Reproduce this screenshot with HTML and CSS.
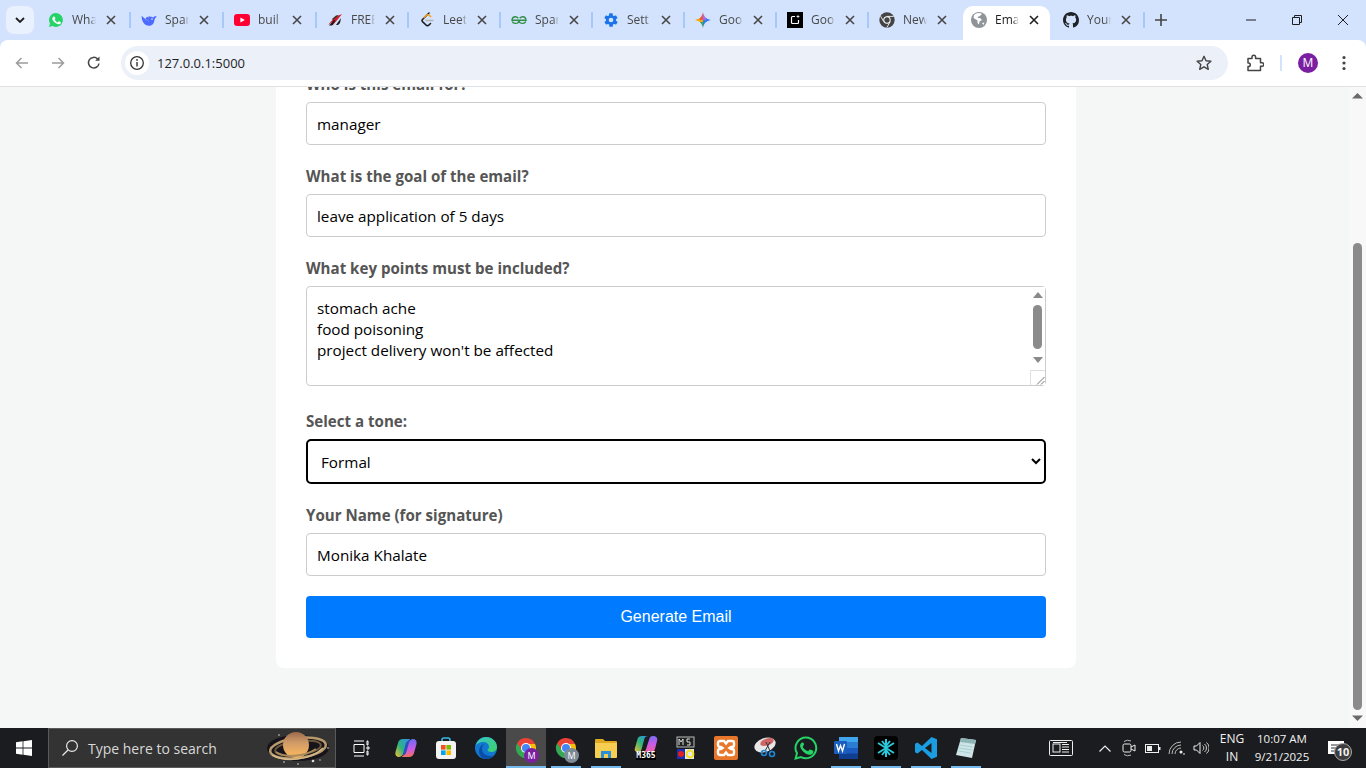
FILE: index.html
```html
<!DOCTYPE html>
<html lang="en">
<head>
<meta charset="utf-8">
<title>Email Generator</title>
<link rel="stylesheet" href="styles.css">
</head>
<body>
<svg class="defs" width="0" height="0">
  <defs>
    <symbol id="x" viewBox="0 0 10 10"><path d="M1 1l8 8M9 1l-8 8" fill="none" stroke="currentColor" stroke-width="1.6"/></symbol>
    <symbol id="wa" viewBox="0 0 24 24"><path d="M12 1.5a10.4 10.4 0 0 0-9 15.7L1.6 22.500l5.400-1.400A10.400 10.400 0 1 0 12 1.500z" fill="#25d366"/><path d="M8.300 6.600c-.3 0-.8.100-1.200.6-.5.500-1.300 1.300-1.300 3s1.300 3.400 1.500 3.600c.2.200 2.500 3.900 6.200 5.300 3 .9 3.700.6 4.300.5.700-.1 2.100-.9 2.400-1.700.3-.8.300-1.500.2-1.700-.1-.2-.3-.2-.7-.4l-2.400-1.200c-.3-.1-.6-.2-.8.200l-1.100 1.400c-.2.200-.4.300-.8.100-.4-.2-1.500-.6-2.800-1.800-1-.9-1.700-2-1.900-2.400-.2-.4 0-.5.200-.7l.9-1.200c.1-.2.100-.4 0-.6L9.800 7.400c-.3-.7-.6-.7-.8-.8z" fill="#fff" transform="translate(1.400 1) scale(.88)"/></symbol>
    <symbol id="chrome" viewBox="0 0 24 24"><path d="M22 12H12l-5 8.700A10 10 0 0 0 12 22a10 10 0 0 0 10-10z" fill="#34a853"/><path d="M3.300 7A10 10 0 0 0 12 22l5-8.700z" fill="#34a853"/><path d="M21.100 8H12v4l5 1.300L12 22a10 10 0 0 0 10-10 10 10 0 0 0-.9-4z" fill="#fbbc04"/><path d="M12 2A10 10 0 0 0 3.300 7l4.500 7.500L12 8h9.100A10 10 0 0 0 12 2z" fill="#ea4335"/><circle cx="12" cy="12" r="5" fill="#fff"/><circle cx="12" cy="12" r="4" fill="#4285f4"/></symbol>
    <clipPath id="gem-clip"><path d="M8 0c.6 4.500 3.500 7.400 8 8-4.500.6-7.400 3.500-8 8-.6-4.500-3.500-7.400-8-8 4.500-.6 7.400-3.500 8-8z"/></clipPath>
  </defs>
</svg>

<header class="titlebar">
  <button class="overview" type="button"><svg width="10" height="6" viewBox="0 0 10 6"><path d="M1 1l4 4 4-4" fill="none" stroke="#1f1f1f" stroke-width="1.800"/></svg></button>
  <div class="tabs">
    <div class="tab sep"><svg class="fav" viewBox="0 0 24 24"><use href="#wa"/></svg><span class="tab-text">Wha</span><svg class="close"><use href="#x"/></svg></div>
    <div class="tab sep"><svg class="fav" viewBox="0 0 24 24"><path d="M1 5.500C.5 13 5 20.500 12 20.500c4 0 7.500-3 8-7.500.3-2.200 1-3.800 2.700-5.200l.8-1.600-2.800.2c-1 .4-1.700 1-2.200 1.900C15.800 7 13 6 11 7c1.200 2 1.300 5 .3 7.200C8 12 4 8.500 1 5.500z" fill="#4d6bfe"/><path d="M11 7c-3 .5-4.500 2-4 3.500 1.300 1.500 2.800 2.700 4.300 3.700 1-2.200.9-5.200-.3-7.200z" fill="#4d6bfe"/><circle cx="16.500" cy="10.500" r="1.100" fill="#fff"/></svg><span class="tab-text">Spar</span><svg class="close"><use href="#x"/></svg></div>
    <div class="tab sep"><svg class="fav" viewBox="0 0 16 16"><rect y="2" width="16" height="12" rx="3.200" fill="#ff0033"/><path d="M6.400 5.400v5.200L10.800 8z" fill="#fff"/></svg><span class="tab-text">buil</span><svg class="close"><use href="#x"/></svg></div>
    <div class="tab sep"><svg class="fav" viewBox="0 0 16 16"><path d="M1 13 8 5l7-3-3.500 4.500L6 13H4l3-4z" fill="#d11f26"/><path d="M2 13.500 7 8l1.500.5L5 13.500zM9 13l5-7-1 5-2 2z" fill="#1a1a1a"/><path d="M5 7 9 3.500l3-.5-6 5z" fill="#333"/></svg><span class="tab-text">FREE</span><svg class="close"><use href="#x"/></svg></div>
    <div class="tab sep"><svg class="fav" viewBox="0 0 16 16"><path d="M10 1 3.500 7.500a1.500 1.500 0 0 0 0 2.100L7 13a2 2 0 0 0 3 0l1.500-1.500" fill="none" stroke="#1a1a1a" stroke-width="1.500" stroke-linecap="round"/><path d="M5 5.500 7.500 3.300c.8-.7 2-.7 2.800 0l1.400 1.300" fill="none" stroke="#f89f1b" stroke-width="1.500" stroke-linecap="round"/><path d="M7 8.500h7" stroke="#b3b3b3" stroke-width="1.500" stroke-linecap="round"/></svg><span class="tab-text">Leet</span><svg class="close"><use href="#x"/></svg></div>
    <div class="tab sep"><svg class="fav" viewBox="0 0 16 16"><path d="M8 8.200H1c.2-2.200 1.500-3.400 3.300-3.400 1.300 0 2.200.5 3 1.400M8 8.200c-.1 2-1.700 3.200-3.700 3.200-1.500 0-2.600-.7-3.100-1.900M8 8.200h7c-.2-2.200-1.500-3.400-3.300-3.400-1.300 0-2.200.5-3 1.400M8 8.200c.1 2 1.700 3.200 3.700 3.200 1.500 0 2.600-.7 3.100-1.900" fill="none" stroke="#2f8d46" stroke-width="1.400"/></svg><span class="tab-text">Spar</span><svg class="close"><use href="#x"/></svg></div>
    <div class="tab sep"><svg class="fav" viewBox="0 0 24 24"><path fill="#1a73e8" fill-rule="evenodd" d="M19.400 13a7.600 7.600 0 0 0 0-2l2.100-1.600a.5.500 0 0 0 .1-.6l-2-3.500a.5.500 0 0 0-.6-.2l-2.500 1a7.300 7.300 0 0 0-1.700-1l-.4-2.700a.5.500 0 0 0-.5-.4h-4a.5.500 0 0 0-.5.400l-.4 2.700a7.300 7.300 0 0 0-1.700 1l-2.500-1a.5.500 0 0 0-.6.200l-2 3.500a.5.500 0 0 0 .1.600L4.600 11a7.600 7.600 0 0 0 0 2l-2.100 1.600a.5.500 0 0 0-.1.600l2 3.500c.1.200.4.300.6.200l2.500-1c.5.400 1.100.7 1.700 1l.4 2.700c0 .2.300.4.500.4h4c.2 0 .5-.2.500-.4l.4-2.700c.6-.3 1.200-.6 1.700-1l2.500 1c.2.100.5 0 .6-.2l2-3.500a.5.500 0 0 0-.1-.6zM12 15.500a3.500 3.500 0 1 1 0-7 3.500 3.500 0 0 1 0 7z"/></svg><span class="tab-text">Sett</span><svg class="close"><use href="#x"/></svg></div>
    <div class="tab sep"><svg class="fav" viewBox="0 0 16 16"><g clip-path="url(#gem-clip)"><rect width="8" height="8" fill="#ef5a3c"/><rect x="8" width="8" height="8" fill="#a56ee8"/><rect y="8" width="8" height="8" fill="#f9ab00"/><rect x="8" y="8" width="8" height="8" fill="#2f7ff0"/><rect x="5" y="10" width="3" height="6" fill="#34a853"/><rect y="6" width="5" height="4" fill="#f9ab00"/><rect x="11" y="6" width="5" height="4" fill="#2f7ff0"/></g></svg><span class="tab-text">Goo</span><svg class="close"><use href="#x"/></svg></div>
    <div class="tab sep"><svg class="fav" viewBox="0 0 16 16"><rect width="16" height="16" fill="#000"/><path d="M8 4.500H5.500a1 1 0 0 0-1 1v5a1 1 0 0 0 1 1h5a1 1 0 0 0 1-1V8" fill="none" stroke="#fff" stroke-width="1.200"/><path d="M11 2.500l.5 1.500 1.500.5-1.500.5-.5 1.500-.5-1.500L9 4.500l1.500-.5z" fill="#fff"/></svg><span class="tab-text">Goo</span><svg class="close"><use href="#x"/></svg></div>
    <div class="tab"><svg class="fav" viewBox="0 0 24 24"><circle cx="12" cy="12" r="11.500" fill="#444"/><circle cx="12" cy="12" r="5.500" fill="#fff"/><circle cx="12" cy="12" r="4" fill="#444"/><path d="M12 6.600h10M7.300 14.700 2.400 6.300M16.700 14.700l-5 8.600" stroke="#fff" stroke-width="1.300"/></svg><span class="tab-text">New</span><svg class="close"><use href="#x"/></svg></div>
    <div class="tab active"><svg class="fav" viewBox="0 0 16 16"><circle cx="8" cy="8" r="8" fill="#8f9499"/><path d="M5 1.500 3 3l-.5 3L5 7.500l1.500 1V11l1.500 1.500.5-3L11 8 9 6H7l-.5-1L9 4l2-2.300A7 7 0 0 0 5 1.500zM11 11l2.500-.5-1 2.500z" fill="#fff"/></svg><span class="tab-text">Ema</span><svg class="close"><use href="#x"/></svg></div>
    <div class="tab sep"><svg class="fav" viewBox="0 0 16 16"><path fill="#1f2328" d="M8 0C3.580 0 0 3.580 0 8c0 3.540 2.290 6.530 5.470 7.590.4.070.55-.17.550-.38 0-.19-.01-.82-.01-1.490-2.010.37-2.530-.49-2.690-.94-.09-.23-.48-.94-.82-1.130-.28-.15-.68-.52-.01-.53.630-.01 1.080.58 1.230.82.720 1.210 1.870.870 2.330.66.070-.52.280-.87.510-1.070-1.780-.2-3.640-.89-3.640-3.950 0-.87.310-1.590.820-2.150-.08-.2-.36-1.020.08-2.120 0 0 .67-.21 2.200.82.640-.18 1.320-.27 2-.27s1.360.09 2 .27c1.530-1.040 2.200-.82 2.200-.82.440 1.100.16 1.920.08 2.120.51.560.82 1.270.82 2.150 0 3.070-1.870 3.750-3.650 3.950.29.250.54.730.54 1.480 0 1.070-.01 1.930-.01 2.200 0 .21.150.46.550.38A8.010 8.010 0 0 0 16 8c0-4.420-3.580-8-8-8z"/></svg><span class="tab-text">Your</span><svg class="close"><use href="#x"/></svg></div>
  </div>
  <button class="newtab" type="button"><svg width="12" height="12" viewBox="0 0 12 12"><path d="M6 0v12M0 6h12" stroke="#444" stroke-width="1.600"/></svg></button>
  <div class="winctl">
    <span class="winbtn"><svg width="10" height="10" viewBox="0 0 10 10"><path d="M0 5h10" stroke="#1f1f1f"/></svg></span>
    <span class="winbtn"><svg width="10" height="10" viewBox="0 0 10 10"><path d="M.5 2.500h7v7h-7zM2.500 2.500v-2h7v7h-2" fill="none" stroke="#1f1f1f"/></svg></span>
    <span class="winbtn"><svg width="10" height="10" viewBox="0 0 10 10"><path d="M0 0l10 10M10 0 0 10" stroke="#1f1f1f"/></svg></span>
  </div>
</header>

<nav class="toolbar">
  <span class="tool"><svg width="16" height="16" viewBox="0 0 16 16"><path d="M14 8H2.500M7.500 3l-5 5 5 5" fill="none" stroke="#9c9c9c" stroke-width="1.500"/></svg></span>
  <span class="tool"><svg width="16" height="16" viewBox="0 0 16 16"><path d="M2 8h11.500M8.500 3l5 5-5 5" fill="none" stroke="#9c9c9c" stroke-width="1.500"/></svg></span>
  <span class="tool"><svg width="16" height="16" viewBox="0 0 16 16"><path d="M13 8.500A5.300 5.300 0 1 1 11.600 4" fill="none" stroke="#444" stroke-width="1.500"/><path d="M13.500 1.500v4.300H9.200z" fill="#444"/></svg></span>
  <div class="omnibox">
    <span class="chip"><svg width="16" height="16" viewBox="0 0 16 16"><circle cx="8" cy="8" r="6.300" fill="none" stroke="#333" stroke-width="1.300"/><path d="M8 7v4.500" stroke="#333" stroke-width="1.400"/><circle cx="8" cy="4.900" r=".9" fill="#333"/></svg></span>
    <span class="url">127.0.0.1:5000</span>
    <svg class="star" width="16" height="16" viewBox="0 0 16 16"><path d="M8 1.300l2 4.500 4.900.5-3.700 3.200 1.100 4.800L8 11.800l-4.300 2.500 1.100-4.800L1.100 6.300 6 5.800z" fill="none" stroke="#444" stroke-width="1.400" stroke-linejoin="round"/></svg>
  </div>
  <span class="tool ext"><svg width="18" height="18" viewBox="0 0 18 18"><path d="M2 4.500h4V3a1.800 1.800 0 0 1 3.600 0v1.500h4.900v4.200H16a1.800 1.800 0 0 1 0 3.600h-1.500v4.200H2v-4h0.500a1.800 1.800 0 0 0 0-3.600H2z" fill="none" stroke="#444" stroke-width="1.500" stroke-linejoin="round"/></svg></span>
  <span class="tool-sep"></span>
  <span class="tool"><span class="avatar">M</span></span>
  <span class="tool"><svg width="4" height="16" viewBox="0 0 4 16"><circle cx="2" cy="2.500" r="1.600" fill="#444"/><circle cx="2" cy="8" r="1.600" fill="#444"/><circle cx="2" cy="13.500" r="1.600" fill="#444"/></svg></span>
</nav>

<div class="viewport">
  <main class="page">
    <form class="card">
      <div class="group">
        <label class="label" for="who">Who is this email for?</label>
        <input class="field" id="who" type="text" value="manager">
      </div>
      <div class="group">
        <label class="label" for="goal">What is the goal of the email?</label>
        <input class="field" id="goal" type="text" value="leave application of 5 days">
      </div>
      <div class="group group-area">
        <label class="label" for="points">What key points must be included?</label>
        <div class="area-wrap">
          <textarea class="field area" id="points">stomach ache
food poisoning
project delivery won't be affected</textarea>
          <div class="area-bar">
            <svg width="10" height="6" viewBox="0 0 10 6"><path d="M0 6l5-6 5 6z" fill="#8a8a8a"/></svg>
            <span class="area-thumb"></span>
            <svg width="10" height="6" viewBox="0 0 10 6"><path d="M0 0l5 6 5-6z" fill="#8a8a8a"/></svg>
          </div>
          <div class="area-corner"><svg width="9" height="9" viewBox="0 0 9 9"><path d="M8.500 1 1 8.500M8.500 5 5 8.500" stroke="#777" stroke-width="1"/></svg></div>
        </div>
      </div>
      <div class="group">
        <label class="label" for="tone">Select a tone:</label>
        <select class="tone" id="tone">
          <option>Formal</option>
          <option>Casual</option>
          <option>Friendly</option>
        </select>
      </div>
      <div class="group">
        <label class="label" for="name">Your Name (for signature)</label>
        <input class="field" id="name" type="text" value="Monika Khalate">
      </div>
      <button class="submit" type="button">Generate Email</button>
    </form>
  </main>
  <aside class="scrollbar">
    <svg class="sb-arrow" width="11" height="7" viewBox="0 0 11 7"><path d="M0 6.500 5.500 1 11 6.500z" fill="#6a6a6a"/></svg>
    <span class="sb-thumb"></span>
    <svg class="sb-arrow" width="11" height="7" viewBox="0 0 11 7"><path d="M0 .5 5.500 6 11 .5z" fill="#6a6a6a"/></svg>
  </aside>
</div>

<footer class="taskbar">
  <span class="start"><svg width="16" height="16" viewBox="0 0 16 16"><path d="M0 2.300 6.600 1.300v6.200H0zM7.400 1.200 16 0v7.500H7.400zM0 8.400h6.600v6.300L0 13.800zM7.400 8.400H16V16l-8.600-1.200z" fill="#fff"/></svg></span>
  <div class="search">
    <svg width="18" height="18" viewBox="0 0 18 18"><circle cx="11" cy="7" r="5.400" fill="none" stroke="#e8e8e8" stroke-width="1.200"/><path d="M7 11 1.500 16.500" stroke="#e8e8e8" stroke-width="1.300"/></svg>
    <span class="search-text">Type here to search</span>
    <svg class="planet" width="66" height="36" viewBox="0 0 66 36">
      <defs>
        <linearGradient id="pl" x1="0" y1="0" x2="0" y2="1"><stop offset="0" stop-color="#9c6a4a"/><stop offset=".4" stop-color="#d09a68"/><stop offset=".8" stop-color="#f0b060"/></linearGradient>
      </defs>
      <ellipse cx="33" cy="18" rx="31" ry="13" fill="#16131a"/>
      <g transform="rotate(-7 33 18)">
        <ellipse cx="33" cy="18" rx="28" ry="10" fill="none" stroke="#b79a6c" stroke-width="2.500"/>
        <ellipse cx="33" cy="18" rx="23" ry="7" fill="none" stroke="#6b563b" stroke-width="2"/>
      </g>
      <circle cx="31" cy="15" r="13" fill="url(#pl)"/>
      <path d="M11 22c8 6 28 5 40-3" fill="none" stroke="#a98a5c" stroke-width="2"/>
      <path d="M7 25c12 7 38 6 51-7" fill="none" stroke="#d6b98a" stroke-width="1.600"/>
      <circle cx="14" cy="5" r=".8" fill="#ddd"/><circle cx="63" cy="18" r=".8" fill="#ddd"/><circle cx="48" cy="31" r="1.300" fill="#ddd"/><circle cx="19" cy="32" r=".8" fill="#ddd"/><circle cx="55" cy="30" r=".7" fill="#ddd"/><circle cx="33" cy="34" r=".8" fill="#ddd"/>
    </svg>
  </div>
  <span class="taskview"><svg width="17" height="17" viewBox="0 0 17 17"><path d="M1 1h10M1 16h10M1 4.500h10v8H1zM14 1h1v4h-1zM14 7h2v2h-2zM14 11h1v4h-1z" fill="none" stroke="#fff" stroke-width="1"/></svg></span>
  <div class="apps">
    <span class="app"><svg width="22" height="22" viewBox="0 0 22 22"><defs><linearGradient id="cp1" x1="0" y1="1" x2="1" y2="0"><stop offset="0" stop-color="#f9c02f"/><stop offset=".45" stop-color="#2fb47c"/><stop offset="1" stop-color="#2f8ff0"/></linearGradient><linearGradient id="cp2" x1="0" y1="0" x2="0" y2="1"><stop offset="0" stop-color="#6a6cf0"/><stop offset=".55" stop-color="#c95be8"/><stop offset="1" stop-color="#f5705c"/></linearGradient></defs><rect x="5" y="4" width="12" height="14" fill="#2b4fc0"/><path d="M14 20H8c-1.500 0-1.500-1 0-1.500 2-.6 3-2 3.500-4L14 5.500C14.500 3.500 16 2 18 2c3 0 4 2.500 3.500 5L19 16c-.6 2.500-2.500 4-5 4z" fill="url(#cp2)"/><path d="M8 2h6c1.500 0 1.500 1 0 1.500-2 .6-3 2-3.500 4L8 16.500C7.500 18.500 6 20 4 20c-3 0-4-2.500-3.500-5L3 6c.6-2.500 2.500-4 5-4z" fill="url(#cp1)"/></svg></span>
    <span class="app"><svg width="24" height="24" viewBox="0 0 24 24"><path d="M8 6V4a2 2 0 0 1 2-2h4a2 2 0 0 1 2 2v2" fill="none" stroke="#3ab8e8" stroke-width="1.600"/><rect x="2" y="5" width="20" height="18" rx="3" fill="#f3f3f3"/><rect x="7" y="9" width="4.600" height="4.600" fill="#f25022"/><rect x="12.400" y="9" width="4.600" height="4.600" fill="#7fba00"/><rect x="7" y="14.400" width="4.600" height="4.600" fill="#00a4ef"/><rect x="12.400" y="14.400" width="4.600" height="4.600" fill="#ffb900"/></svg></span>
    <span class="app"><svg width="24" height="24" viewBox="0 0 24 24"><defs><linearGradient id="ed1" x1="0" y1="0" x2="1" y2="1"><stop offset="0" stop-color="#36c7c4"/><stop offset="1" stop-color="#3ecf6e"/></linearGradient></defs><circle cx="12" cy="12" r="11" fill="#1277cf"/><path d="M1.500 10C3 4 8 1 12 1c6 0 11 4.500 11 10 0 3.500-3 5-5.500 5-2 0-4-1-4-2 0-.5 1.500-1 1.500-3C15 8 12.500 6 9.500 6 6 6 2.500 8 1.500 10z" fill="url(#ed1)"/><path d="M12.500 23c-5 0-7.500-4-7.500-8 0-3 2-6 5-7-1.500 1.500-2 3.500-2 5 0 4 4 7 8.500 7 1 0 2-.2 2.500-.5-1.500 2-4 3.500-6.500 3.500z" fill="#0a4ea8"/></svg></span>
    <span class="app app-active"><span class="badged"><svg width="24" height="24"><use href="#chrome"/></svg><span class="mini mini-purple">M</span></span></span>
    <span class="app app-open"><span class="badged"><svg width="24" height="24"><use href="#chrome"/></svg><span class="mini mini-gray">M</span></span></span>
    <span class="app app-open"><svg width="22" height="20" viewBox="0 0 22 20"><path d="M0 2a1 1 0 0 1 1-1h7l2 2h11a1 1 0 0 1 1 1v3H0z" fill="#e0a820"/><path d="M0 5h22v14a1 1 0 0 1-1 1H1a1 1 0 0 1-1-1z" fill="#f7cd52"/><path d="M6 20v-7h10v7h-3v-4H9v4z" fill="#2b8fd8"/></svg></span>
    <span class="app"><span class="m365"><svg width="24" height="16" viewBox="0 0 22 15"><defs><linearGradient id="m1" x1="0" y1="1" x2="1" y2="0"><stop offset="0" stop-color="#f0c030"/><stop offset=".5" stop-color="#2fb47c"/><stop offset="1" stop-color="#2f8ff0"/></linearGradient><linearGradient id="m2" x1="0" y1="0" x2="0" y2="1"><stop offset="0" stop-color="#7a6cf0"/><stop offset=".5" stop-color="#c95be8"/><stop offset="1" stop-color="#f0609a"/></linearGradient></defs><path d="M13 15H8c2 0 2.500-1 3-2.500L14 3c.5-2 1.500-3 3.500-3 3 0 4.500 1.500 4 4l-2 8c-.5 2-2 3-4 3z" fill="url(#m2)"/><path d="M7 0h6c-2 0-3 1-3.500 2.500L7 12c-.5 2-1.500 3-3.500 3-2.500 0-3.500-1.500-3-3L3 3C3.500 1 5 0 7 0z" fill="url(#m1)"/></svg><span class="m365-text">M365</span></span></span>
    <span class="app"><svg width="20" height="24" viewBox="0 0 20 24"><rect x="1" y="1" width="17" height="10" fill="#222" stroke="#bbb"/><rect x="1" y="13" width="17" height="10" fill="#e8e8e8"/><rect x="1" y="13" width="8" height="10" fill="#1b2fb0"/><circle cx="5" cy="18" r="3" fill="#e02020"/><circle cx="14" cy="18" r="3.400" fill="none" stroke="#f0e020" stroke-width="2"/><path d="M3 9V3l2 3 2-3v6M14 3h-3v3h3v3h-3" fill="none" stroke="#ddd" stroke-width="1"/></svg></span>
    <span class="app"><svg width="24" height="24" viewBox="0 0 24 24"><rect width="24" height="24" rx="2" fill="#e8762b"/><path d="M6 5h4l2 2.500L14 5h4a2 2 0 0 1 2 2v2a2 2 0 0 1-2 2h-1l-1.500 1 1.500 1h1a2 2 0 0 1 2 2v2a2 2 0 0 1-2 2h-4l-2-2.500L10 19H6a2 2 0 0 1-2-2v-2a2 2 0 0 1 2-2h1l1.500-1L7 11H6a2 2 0 0 1-2-2V7a2 2 0 0 1 2-2z" fill="none" stroke="#fff" stroke-width="2.400"/></svg></span>
    <span class="app"><svg width="24" height="24" viewBox="0 0 24 24"><ellipse cx="11" cy="9" rx="11" ry="7" fill="#e8e8e8" transform="rotate(-20 11 9)"/><ellipse cx="13" cy="6" rx="7" ry="3.500" fill="#c83a3a" opacity=".75" transform="rotate(-20 13 6)"/><path d="M12 6l4 9M16 6l-5 9" stroke="#333" stroke-width="1"/><circle cx="10" cy="17" r="2.500" fill="none" stroke="#1e88d8" stroke-width="1.600"/><circle cx="18" cy="18" r="2.500" fill="none" stroke="#1e88d8" stroke-width="1.600"/></svg></span>
    <span class="app"><svg width="24" height="24" viewBox="0 0 24 24"><path d="M12 1.500a10.400 10.400 0 0 0-9 15.700L1.600 22.500l5.400-1.400A10.400 10.400 0 1 0 12 1.500z" fill="none" stroke="#25d366" stroke-width="2"/><path d="M8.300 6.600c-.3 0-.8.100-1.200.6-.5.500-1 1.300-1 2.700 0 1.700 1.300 3.400 1.500 3.600.2.200 2.500 3.900 6.200 5 2.200.6 3.400.2 4-.3.700-.5 1.300-1.100 1.400-1.700.2-.8.200-1.300.1-1.500-.1-.2-.3-.2-.7-.4l-2.400-1.100c-.3-.1-.6-.2-.8.200l-1.100 1.300c-.2.200-.4.300-.8.100-.4-.2-1.500-.6-2.800-1.800-1-.9-1.700-2-1.900-2.400-.2-.4 0-.5.200-.7l.9-1.200c.1-.2.100-.4 0-.6L9.800 7.400c-.3-.7-.6-.7-.8-.8z" fill="#25d366"/></svg></span>
    <span class="app app-open"><svg width="24" height="22" viewBox="0 0 24 22"><rect x="5" width="19" height="22" rx="1" fill="#185abd"/><rect x="5" width="19" height="5.500" fill="#41a5ee"/><rect x="5" y="5.500" width="19" height="5.500" fill="#2b7cd3"/><rect x="5" y="16.500" width="19" height="5.500" fill="#103f91"/><rect y="4" width="13" height="13" rx="1" fill="#1a5fc0"/><path d="M2.500 7 4.500 14 6.500 8.500 8.500 14 10.500 7" fill="none" stroke="#fff" stroke-width="1.400"/></svg></span>
    <span class="app app-open"><svg width="24" height="24" viewBox="0 0 24 24"><rect width="24" height="24" rx="4" fill="#000"/><path d="M12 3v18M4 7l16 10M20 7 4 17M8 5l4 5 4-5M8 19l4-5 4 5" fill="none" stroke="#2ac8d8" stroke-width="2"/></svg></span>
    <span class="app app-open"><svg width="24" height="24" viewBox="0 0 24 24"><path d="M17.500 1 8 10 3.500 6.500 1 7.800v8.400l2.500 1.300L8 14l9.500 9 5.500-2.300V3.300zM17.500 7v10L11 12z" fill="#1b9de2" fill-rule="evenodd"/></svg></span>
    <span class="app app-open"><svg width="24" height="24" viewBox="0 0 24 24"><path d="M7 2 22 4l-4 18L2 19z" fill="#cfe4e6"/><path d="M7 2 22 4l-1 4L6 6z" fill="#8fb4b8"/><path d="M5.500 9l13 2M5 12l13 2M4.500 15l12 2" stroke="#9cc" stroke-width=".8"/></svg></span>
  </div>
  <div class="tray">
    <span class="news"><svg width="24" height="16" viewBox="0 0 24 16"><rect x=".5" y=".5" width="23" height="15" rx="1" fill="none" stroke="#eee"/><rect x="4" y="4" width="7" height="8" fill="none" stroke="#eee"/><path d="M13 4.500h7M13 7h7M13 9.500h7M13 12h7M4 2.500h14" stroke="#eee"/></svg></span>
    <span class="tray-chev"><svg width="12" height="7" viewBox="0 0 12 7"><path d="M.5 6.500 6 1l5.500 5.500" fill="none" stroke="#eee" stroke-width="1.200"/></svg></span>
    <span class="tray-ico"><svg width="14" height="18" viewBox="0 0 14 18"><rect x="1" y="5" width="8" height="8" rx="1.500" fill="none" stroke="#eee"/><path d="M9 8l4-2v6l-4-2" fill="none" stroke="#eee"/><path d="M2 2.500A7 7 0 0 1 9 2M2 15.500a7 7 0 0 0 7 .5" fill="none" stroke="#bbb"/></svg></span>
    <span class="tray-ico"><svg width="16" height="9" viewBox="0 0 16 9"><rect x=".5" y=".5" width="13" height="8" fill="none" stroke="#eee"/><rect x="2" y="2" width="5" height="5" fill="#eee"/><rect x="14" y="3" width="1.500" height="3" fill="#eee"/></svg></span>
    <span class="tray-ico"><svg width="18" height="14" viewBox="0 0 18 14"><path d="M1 13A12 12 0 0 1 13 1M4 13a9 9 0 0 1 9-9M7 13a6 6 0 0 1 6-6" fill="none" stroke="#bbb"/><circle cx="13" cy="11" r="1.500" fill="#eee"/><path d="M15 13h2" stroke="#eee"/></svg></span>
    <span class="tray-ico"><svg width="16" height="14" viewBox="0 0 16 14"><path d="M1 5h2.500L7 1.500v11L3.500 9H1z" fill="none" stroke="#eee"/><path d="M9.500 4.500a3 3 0 0 1 0 5M11.500 3a5 5 0 0 1 0 8M13.500 1.500a7 7 0 0 1 0 11" fill="none" stroke="#ccc"/></svg></span>
    <span class="lang"><span>ENG</span><span>IN</span></span>
    <span class="clock"><span>10:07 AM</span><span>9/21/2025</span></span>
    <span class="notify">
      <svg width="16" height="14" viewBox="0 0 16 14"><path d="M0 0h16v14h-4l-1-1H0z" fill="#fff"/><path d="M3 4h10M3 7h10M3 10h6" stroke="#333"/></svg>
      <span class="notify-count">10</span>
    </span>
  </div>
</footer>
</body>
</html>
```
FILE: styles.css
```css
* { box-sizing: border-box; }
html, body { margin: 0; height: 100%; overflow: hidden; }
body {
  display: flex;
  flex-direction: column;
  width: 1366px;
  height: 768px;
  font-family: "Open Sans", "Noto Sans", sans-serif;
  background: #d3e3fd;
}
.defs { position: absolute; }
button { border: 0; padding: 0; background: none; font: inherit; }

.titlebar { display: flex; height: 40px; flex: none; align-items: flex-start; background: #d3e3fd; }
.overview {
  flex: none; width: 28px; height: 28px; margin: 6px 4px 0 6px;
  background: #e9f1fe; border-radius: 8px;
  display: flex; align-items: center; justify-content: center;
}
.tabs { display: flex; }
.tab {
  position: relative; width: 92px; height: 40px; flex: none;
  display: flex; align-items: center; padding: 0 0 0 10px; color: #474747;
}
.tab:nth-child(-n+3) { width: 93px; }
.tab.sep::after {
  content: ""; position: absolute; right: 0; top: 12px; width: 2px; height: 16px; background: #a8c7fa;
}
.tab.active { color: #1f1f1f; }
.tab.active::before {
  content: ""; position: absolute; left: 2px; right: 3px; top: 6px; bottom: 0;
  background: #fff; border-radius: 10px 10px 0 0;
}
.fav { position: relative; flex: none; width: 16px; height: 16px; }
.tab-text {
  position: relative; flex: none; width: 24px; margin-left: 8px; overflow: hidden; white-space: nowrap;
  font-size: 12px; line-height: 16px;
  -webkit-mask-image: linear-gradient(90deg, #000 75%, transparent 100%);
  mask-image: linear-gradient(90deg, #000 75%, transparent 100%);
}
.close { position: relative; flex: none; width: 10px; height: 10px; margin-left: 10px; color: #474747; }
.tab.active .close { color: #1f1f1f; }
.newtab { flex: none; width: 32px; height: 40px; display: flex; align-items: center; justify-content: center; }
.winctl { display: flex; margin-left: auto; height: 40px; }
.winbtn { width: 46px; height: 40px; display: flex; align-items: center; justify-content: center; }

.toolbar {
  flex: none; height: 47px; padding: 0 4px 1px; display: flex; align-items: center;
  background: #fff; border-radius: 8px 8px 0 0; border-bottom: 1px solid #dfe1e5;
}
.tool { flex: none; width: 36px; height: 34px; display: flex; align-items: center; justify-content: center; }
.omnibox {
  flex: none; width: 1107px; height: 34px; margin-left: 9px; padding: 0 16px 0 4px;
  display: flex; align-items: center; background: #ebf0f9; border-radius: 17px;
}
.chip { width: 24px; height: 24px; flex: none; border-radius: 50%; background: #fff; display: flex; align-items: center; justify-content: center; }
.url { margin-left: 8px; font-size: 13px; color: #1f1f1f; }
.star { margin-left: auto; }
.ext { margin-left: 9px; }
.tool-sep { flex: none; width: 2px; height: 16px; margin: 0 8px 0 7px; background: #d3e3fd; }
.avatar {
  width: 20px; height: 20px; border-radius: 50%; background: #7b1fa2; color: #fff;
  font-size: 12px; display: flex; align-items: center; justify-content: center;
}

.viewport { flex: 1; display: flex; min-height: 0; background: #f4f7f6; }
.page { flex: 1; min-width: 0; overflow: hidden; }
.card {
  width: 800px; margin: -44px 0 0 276px; padding: 30px;
  background: #fff; border-radius: 8px;
}
.group { margin-bottom: 20px; }
.group-area { margin-bottom: 24px; }
.label {
  display: block; margin-bottom: 7px; font-size: 15.1px; line-height: 22px; font-weight: 700; color: #555;
}
.field {
  display: block; width: 100%; height: 43px; padding: 10px; border: 1px solid #ccc; border-radius: 4px;
  font-family: inherit; font-size: 15.25px; line-height: 21px; color: #000; background: #fff; outline: 0;
}
.area-wrap { position: relative; height: 100px; }
.area { height: 100px; padding-top: 11px; resize: none; overflow: hidden; }
.area-bar {
  position: absolute; right: 1px; top: 1px; bottom: 16px; width: 15px; background: #fff;
  display: flex; flex-direction: column; align-items: center; padding-top: 5px;
}
.area-thumb { width: 9px; height: 44px; margin: 7px 0 8px; background: #8b8b8b; border-radius: 5px; }
.area-corner {
  position: absolute; right: 1px; bottom: 1px; width: 15px; height: 15px;
  background: #fff; border: 1px solid #e0e0e0; border-width: 1px 0 0 1px;
  display: flex; align-items: flex-end; justify-content: flex-end;
}
.tone {
  display: block; width: 100%; height: 45px; padding: 10px 9px; border: 2px solid #000; border-radius: 5px;
  font-family: inherit; font-size: 15.25px; color: #000; background: #fff; outline: 0;
}
.submit {
  display: block; width: 100%; height: 42px; background: #007bff; color: #fff; border-radius: 4px;
  font-family: "Liberation Sans", Arial, sans-serif; font-size: 16px;
}

.scrollbar {
  flex: none; width: 17px; background: #f8f8f8; display: flex; flex-direction: column; align-items: center;
}
.sb-arrow { flex: none; margin-top: 5px; }
.sb-thumb { flex: none; width: 9px; height: 467px; margin-top: 144px; background: #8b8b8b; border-radius: 5px; }

.taskbar {
  flex: none; height: 40px; display: flex; align-items: center; background: #1b1c1f; color: #f2f2f2;
}
.start { flex: none; width: 48px; height: 40px; display: flex; align-items: center; justify-content: center; }
.search {
  flex: none; width: 288px; height: 40px; padding: 0 4px 0 12px; display: flex; align-items: center;
  background: #333; border: 1px solid #5a5a5a;
}
.search-text { margin-left: 9px; font-size: 14px; color: #d8d8d8; }
.planet { margin-left: auto; }
.taskview { flex: none; width: 50px; display: flex; justify-content: center; }
.apps { display: flex; flex: none; }
.app {
  position: relative; flex: none; width: 40px; height: 40px; display: flex; align-items: center; justify-content: center;
}
.app-open::after, .app-active::after {
  content: ""; position: absolute; left: 5px; right: 5px; bottom: 0; height: 2px; background: #76b9ed;
}
.app-active { background: #4a4a4a; }
.app-active::after { left: 0; right: 0; }
.badged { position: relative; width: 24px; height: 24px; display: block; }
.mini {
  position: absolute; right: -1px; bottom: -3px; width: 15px; height: 15px; border-radius: 50%;
  font-size: 9px; line-height: 15px; text-align: center; color: #fff;
}
.mini-purple { background: #7b1fa2; }
.mini-gray { background: #7c8a96; }
.m365 { display: flex; flex-direction: column; align-items: center; }
.m365-text { font-size: 8px; line-height: 8px; font-weight: 700; color: #fff; background: #000; font-family: "DejaVu Sans Mono", monospace; }
.tray { flex: 1; display: flex; align-items: center; min-width: 0; padding-left: 63px; }
.news { flex: none; width: 24px; display: flex; }
.tray-chev { flex: none; width: 12px; margin-left: 26px; display: flex; }
.tray-ico { flex: none; width: 24px; display: flex; justify-content: center; }
.tray-chev + .tray-ico { margin-left: 6px; }
.lang, .clock { flex: none; display: flex; flex-direction: column; align-items: center; font-size: 12px; line-height: 18px; color: #f2f2f2; }
.lang { width: 30px; margin-left: 4px; }
.clock { width: 62px; margin-left: 4px; font-size: 11.5px; }
.notify { position: relative; flex: none; width: 36px; margin-left: 15px; height: 20px; display: flex; align-items: center; }
.notify-count {
  position: absolute; left: 6px; top: 5px; width: 18px; height: 18px; border-radius: 50%;
  background: #3d3d3d; border: 1px solid #aaa; font-size: 11px; line-height: 16px; text-align: center; font-weight: 700;
}
```
